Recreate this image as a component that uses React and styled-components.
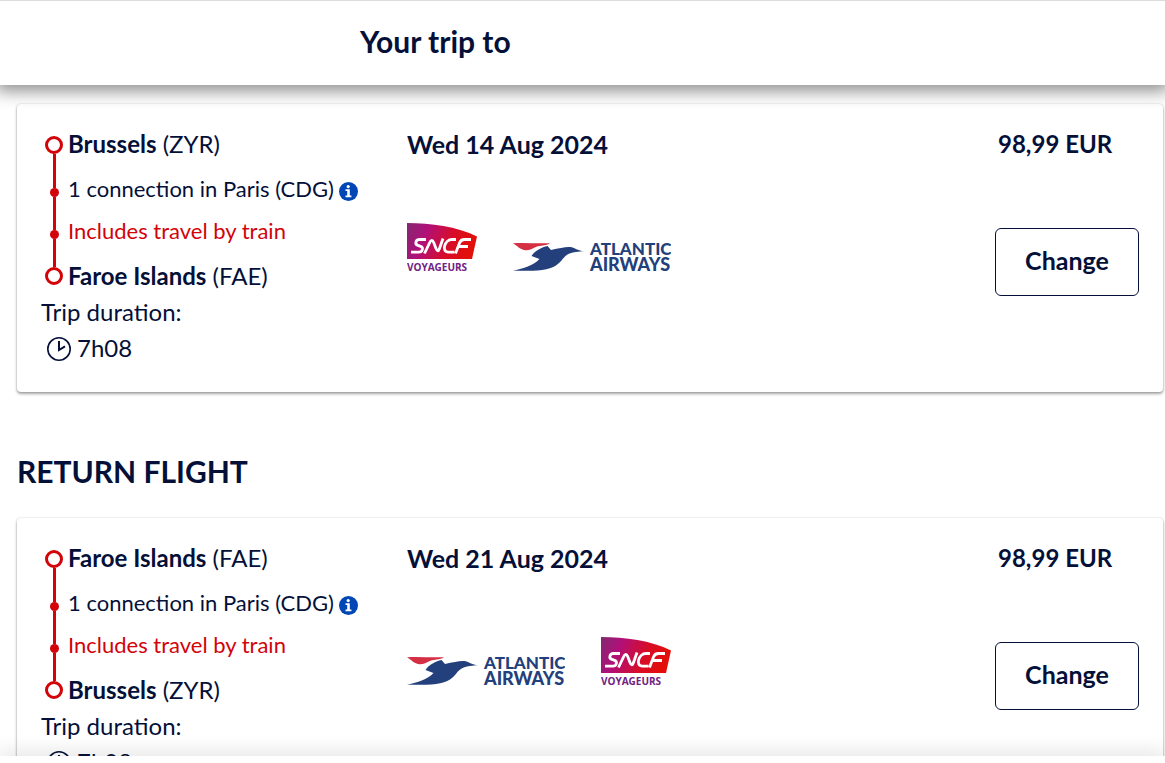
import React from 'react';
import styled, { createGlobalStyle } from 'styled-components';

const navy = '#051039';
const red = '#d20309';

const GlobalStyle = createGlobalStyle`
  * {
    box-sizing: border-box;
  }
  body {
    margin: 0;
    background: #fff;
    color: ${navy};
    font-family: Lato, 'Liberation Sans', sans-serif;
    font-size: 24px;
    line-height: 36px;
  }
`

const Page = styled.div`
  display: flex;
  flex-direction: column;
  height: 100vh;
`

const Header = styled.header`
  z-index: 1;
  flex: none;
  padding: 18px 360px 22px;
  border-top: 1px solid #dcdcdc;
  background: #fff;
  box-shadow: 0 2px 16px 4px rgba(0, 0, 0, 0.45);
`

const Title = styled.h1`
  margin: 0;
  font-size: 30px;
  line-height: 44px;
  font-weight: 700;
  white-space: nowrap;
`

const Main = styled.main`
  flex: 1;
  min-height: 0;
  overflow: hidden;
  padding: 19px 2px 0 17px;
`

const BottomBar = styled.footer`
  z-index: 1;
  flex: none;
  height: 7px;
  background: #fff;
  box-shadow: 0 0 20px 2px rgba(0, 0, 0, 0.16);
`

const SectionTitle = styled.h2`
  margin: 60px 0 28px;
  font-size: 30px;
  line-height: 38px;
  font-weight: 700;
`

const Card = styled.article`
  display: grid;
  grid-template-columns: repeat(3, 1fr);
  min-height: 288px;
  padding: 24px;
  border-radius: 4px;
  background: #fff;
  box-shadow: 0 2px 3px rgba(0, 0, 0, 0.35), 0 0 2px rgba(0, 0, 0, 0.2);
`

const Stops = styled.ul`
  margin: 0;
  padding: 0;
  list-style: none;
`

const Stop = styled.li`
  display: grid;
  grid-template-columns: 26px auto;
  column-gap: 1px;
  justify-content: start;
  height: ${props => props.$height}px;
  font-size: ${props => props.$small ? 22 : 24}px;
  line-height: ${props => props.$small ? 30 : 32}px;
  color: ${props => props.$train ? red : navy};
  white-space: nowrap;
`

const Rail = styled.span`
  display: flex;
  flex-direction: column;
  align-items: center;
  padding-top: ${props => props.$first ? 8 : 0}px;
`

const Ring = styled.span`
  flex: none;
  width: 18px;
  height: 18px;
  border: 3px solid ${red};
  border-radius: 50%;
`

const Dot = styled.span`
  flex: none;
  width: 9px;
  height: 9px;
  border-radius: 50%;
  background: ${red};
`

const Line = styled.span`
  flex: ${props => props.$size ? 'none' : 1};
  width: 3px;
  height: ${props => props.$size ? props.$size + 'px' : 'auto'};
  background: ${red};
`

const InfoButton = styled.button`
  padding: 0;
  margin-left: 5px;
  border: 0;
  background: none;
  vertical-align: -4px;
  line-height: 0;
`

const Duration = styled.dl`
  margin: 0;
`

const DurationLabel = styled.dt`
  line-height: 36px;
`

const DurationValue = styled.dd`
  display: flex;
  align-items: center;
  gap: 6px;
  margin: 0;
  padding-left: 6px;

  svg {
    margin-top: 2px;
  }
`

const Details = styled.div`
  display: flex;
  flex-direction: column;
`

const FlightDate = styled.time`
  font-size: 25px;
  line-height: 32px;
  font-weight: 700;
`

const Carriers = styled.div`
  display: flex;
  gap: 36px;
  padding-top: 63px;
`

const Fare = styled.div`
  display: flex;
  flex-direction: column;
  justify-self: end;
  width: 144px;
`

const Price = styled.strong`
  padding-left: 3px;
  line-height: 32px;
`

const ChangeButton = styled.button`
  height: 68px;
  margin-top: 68px;
  padding: 0 0 4px;
  border: 1px solid ${navy};
  border-radius: 6px;
  background: #fff;
  color: ${navy};
  font: inherit;
  font-size: 25px;
  font-weight: 700;
`

const InfoIcon = () => (
  <svg width="19" height="19" viewBox="0 0 19 19" aria-hidden="true">
    <circle cx="9.5" cy="9.5" r="9.5" fill="#0046b4" />
    <circle cx="9.2" cy="4.6" r="1.6" fill="#fff" />
    <path d="M6.5 7.3h4.3v6.2h1.6v1.7H6.5v-1.7h1.700V9H6.500z" fill="#fff" />
  </svg>
)

const ClockIcon = () => (
  <svg width="24" height="24" viewBox="0 0 24 24" fill="none" stroke={navy} aria-hidden="true">
    <circle cx="12" cy="12" r="11.2" strokeWidth="1.6" />
    <path d="M12 4v9l6-3.600" strokeWidth="2" />
  </svg>
)

const SncfLogo = () => (
  <svg width="70" height="54" viewBox="0 0 70 54" role="img" aria-label="SNCF Voyageurs">
    <defs>
      <linearGradient id="sncf" x1="0" x2="1" y1="0" y2="0.2">
        <stop offset="0" stopColor="#82286f" />
        <stop offset="0.3" stopColor="#b0107a" />
        <stop offset="0.7" stopColor="#d80c28" />
        <stop offset="1" stopColor="#e20f0a" />
      </linearGradient>
    </defs>
    <path d="M0 0C24 0 50 3.500 70 13.500L65 36H0z" fill="url(#sncf)" />
    <g fill="none" stroke="#fff" strokeWidth="2.800">
      <path d="M19 16.500h-6.500c-4 0-5 4.800-1.600 5.900l2.700.9c3.200 1.100 2 5.900-1.800 5.900H4" />
      <path d="M17.500 30.500l5-10.500c1.500-3.500 3-3.500 4.200-.5l2.300 6c1.200 3.200 2.400 3.200 3.500 0l3.500-10" />
      <path d="M49 16.500h-4c-7.500 0-11 12.700-3.500 12.700h6" />
      <path d="M48.500 30.500l4-10.500c1-2.800 2.500-3.500 5-3.500h6.500M51.500 23.500h9.500" />
    </g>
    <text x="0" y="48" fill="#702283" fontFamily="'Open Sans', sans-serif" fontSize="10" fontWeight="700">VOYAGEURS</text>
  </svg>
)

const AtlanticLogo = () => (
  <svg width="158" height="54" viewBox="0 0 158 54" role="img" aria-label="Atlantic Airways">
    <path d="M0 20.300C12 19.500 24 20.800 37 20.200 34 22.500 29 22.300 25 23.300 20 24.700 18 27.500 13 27.200 7 27 4 22.500 0 20.300z" fill="#d42f43" />
    <path d="M34.500 23C29 24.300 22 27.500 18.500 33l8 3C20 43 9 45.500 0 47.800c19 .2 35 .2 43-5.300C51 37 50 31.500 61 29.300l10-1.200c-5-.6-7-1.600-9.500-2.900-5-2.600-12-.7-23.500 1.800z" fill="#233f7c" />
    <g fill="#233f7c" fontFamily="Lato, sans-serif" fontWeight="900">
      <text x="77" y="32" fontSize="17">ATLANTIC</text>
      <text x="77" y="48" fontSize="18">AIRWAYS</text>
    </g>
  </svg>
)

const logos = {
  sncf: SncfLogo,
  atlantic: AtlanticLogo
}

const flights = [
  {
    from: 'Brussels',
    fromCode: 'ZYR',
    to: 'Faroe Islands',
    toCode: 'FAE',
    date: 'Wed 14 Aug 2024',
    carriers: ['sncf', 'atlantic']
  },
  {
    from: 'Faroe Islands',
    fromCode: 'FAE',
    to: 'Brussels',
    toCode: 'ZYR',
    date: 'Wed 21 Aug 2024',
    carriers: ['atlantic', 'sncf']
  }
]

const Flight = ({ from, fromCode, to, toCode, date, carriers }) => {
  return (
    <Card>
      <div>
        <Stops>
          <Stop $height={46}>
            <Rail $first><Ring /><Line /></Rail>
            <span><b>{from}</b> ({fromCode})</span>
          </Stop>
          <Stop $height={42} $small>
            <Rail><Line $size={14} /><Dot /><Line /></Rail>
            <span>
              1 connection in Paris (CDG)
              <InfoButton aria-label="Connection details"><InfoIcon /></InfoButton>
            </span>
          </Stop>
          <Stop $height={44} $small $train>
            <Rail><Line $size={14} /><Dot /><Line /></Rail>
            <span>Includes travel by train</span>
          </Stop>
          <Stop $height={34}>
            <Rail><Line $size={7} /><Ring /></Rail>
            <span><b>{to}</b> ({toCode})</span>
          </Stop>
        </Stops>
        <Duration>
          <DurationLabel>Trip duration:</DurationLabel>
          <DurationValue><ClockIcon />7h08</DurationValue>
        </Duration>
      </div>
      <Details>
        <FlightDate>{date}</FlightDate>
        <Carriers>
          {carriers.map(name => {
            const Logo = logos[name]
            return <Logo key={name} />
          })}
        </Carriers>
      </Details>
      <Fare>
        <Price>98,99 EUR</Price>
        <ChangeButton>Change</ChangeButton>
      </Fare>
    </Card>
  )
}

const App = () => {
  return (
    <Page>
      <GlobalStyle />
      <Header>
        <Title>Your trip to</Title>
      </Header>
      <Main>
        <Flight {...flights[0]} />
        <SectionTitle>RETURN FLIGHT</SectionTitle>
        <Flight {...flights[1]} />
      </Main>
      <BottomBar />
    </Page>
  )
}

export default App;
